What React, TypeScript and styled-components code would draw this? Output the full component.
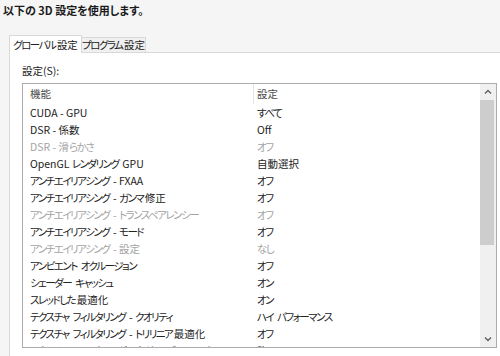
import React from 'react';
import styled, { createGlobalStyle } from 'styled-components';

const GlobalStyle = createGlobalStyle`
  html, body {
    margin: 0;
    padding: 0;
    background: #f5f5f5;
  }
  body {
    font-family: "Noto Sans CJK JP", "Noto Sans", sans-serif;
    font-feature-settings: "palt";
  }
`;

const Screen = styled.div`
  width: 500px;
  height: 356px;
  overflow: hidden;
  display: flex;
  flex-direction: column;
`;

const Title = styled.h1`
  margin: 0;
  padding-left: 3px;
  height: 20px;
  line-height: 20px;
  font-size: 11px;
  font-weight: 700;
  color: #1a1a1a;
`;

const TabRow = styled.div`
  display: flex;
  align-items: flex-end;
  height: 18px;
  margin: 15px 0 -1px 9px;
  position: relative;
  z-index: 1;
`;

const Tab = styled.div<{ $active?: boolean }>`
  box-sizing: border-box;
  width: ${(p) => (p.$active ? '73px' : '65px')};
  height: ${(p) => (p.$active ? '18px' : '16px')};
  line-height: ${(p) => (p.$active ? '17px' : '14px')};
  text-align: center;
  font-size: 10.5px;
  color: #222222;
  background: ${(p) => (p.$active ? '#ffffff' : '#f0f0f0')};
  border: 1px solid #d9d9d9;
  border-bottom: ${(p) => (p.$active ? 'none' : '1px solid #d9d9d9')};
  margin-left: ${(p) => (p.$active ? '0' : '-1px')};
  white-space: nowrap;
`;

const Panel = styled.div`
  flex: 1;
  margin-left: 9px;
  background: #ffffff;
  border-top: 1px solid #d9d9d9;
  border-left: 1px solid #d9d9d9;
  padding-left: 12px;
`;

const Label = styled.div`
  margin-top: 11px;
  height: 14px;
  line-height: 14px;
  font-size: 10.5px;
  color: #222222;
`;

const ListBox = styled.div`
  box-sizing: border-box;
  margin-top: 5px;
  width: 475px;
  height: 265px;
  border: 1px solid #acacac;
  display: flex;
  overflow: hidden;
`;

const ListBody = styled.div`
  flex: 1;
  display: flex;
  flex-direction: column;
  overflow: hidden;
`;

const Row = styled.div<{ $header?: boolean; $disabled?: boolean }>`
  flex: none;
  display: grid;
  grid-template-columns: 230px 1fr;
  height: ${(p) => (p.$header ? '20px' : '17px')};
  line-height: ${(p) => (p.$header ? '20px' : '17px')};
  font-size: 10.5px;
  color: ${(p) => (p.$header ? '#4a4a4a' : p.$disabled ? '#a3a3a3' : '#222222')};
  white-space: nowrap;
`;

const Cell = styled.div<{ $divider?: boolean }>`
  padding-left: ${(p) => (p.$divider ? '3px' : '7px')};
  border-left: ${(p) => (p.$divider ? '1px solid #e5e5e5' : 'none')};
  overflow: hidden;
`;

const ValueCell = styled.div`
  padding-left: 4px;
  overflow: hidden;
`;

// kana are set much narrower in the reference UI font
const Kana = styled.span`
  letter-spacing: -1.5px;
  padding-right: 1.5px;
`;

const ScrollBar = styled.div`
  width: 16px;
  display: flex;
  flex-direction: column;
  background: #f0f0f0;
`;

const ArrowBox = styled.div`
  height: 16px;
  display: flex;
  align-items: center;
  justify-content: center;
  flex: none;
`;

const Thumb = styled.div`
  height: 145px;
  margin-right: 2px;
  background: #cdcdcd;
  flex: none;
`;

const Track = styled.div`
  flex: 1;
`;

type Setting = { name: string; value: string; disabled?: boolean };

const settings: Setting[] = [
  { name: 'CUDA - GPU', value: 'すべて' },
  { name: 'DSR - 係数', value: 'Off' },
  { name: 'DSR - 滑らかさ', value: 'オフ', disabled: true },
  { name: 'OpenGL レンダリング GPU', value: '自動選択' },
  { name: 'アンチエイリアシング - FXAA', value: 'オフ' },
  { name: 'アンチエイリアシング - ガンマ修正', value: 'オフ' },
  { name: 'アンチエイリアシング - トランスペアレンシー', value: 'オフ', disabled: true },
  { name: 'アンチエイリアシング - モード', value: 'オフ' },
  { name: 'アンチエイリアシング - 設定', value: 'なし', disabled: true },
  { name: 'アンビエント オクルージョン', value: 'オフ' },
  { name: 'シェーダー キャッシュ', value: 'オン' },
  { name: 'スレッドした最適化', value: 'オン' },
  { name: 'テクスチャ フィルタリング - クオリティ', value: 'ハイ パフォーマンス' },
  { name: 'テクスチャ フィルタリング - トリリニア最適化', value: 'オフ' },
  { name: 'テクスチャ フィルタリング - ネガティブ LOD バイアス', value: '許可' },
];

const kanaRun = /([\u3041-\u30ff]+)/;
const isKana = /^[\u3041-\u30ff]+$/;

const UiText: React.FC<{ text: string }> = ({ text }) => (
  <>
    {text.split(kanaRun).map((part, i) =>
      isKana.test(part) ? <Kana key={i}>{part}</Kana> : <React.Fragment key={i}>{part}</React.Fragment>
    )}
  </>
);

const Chevron: React.FC<{ up?: boolean }> = ({ up }) => (
  <svg width="8" height="6" viewBox="0 0 8 6">
    <polyline
      points={up ? '1,4.5 4,1.5 7,4.5' : '1,1.5 4,4.5 7,1.5'}
      fill="none"
      stroke="#606060"
      strokeWidth="1.4"
    />
  </svg>
);

const App: React.FC = () => (
  <Screen>
    <GlobalStyle />
    <Title>以下の 3D 設定を使用します。</Title>
    <TabRow>
      <Tab $active><UiText text="グローバル設定" /></Tab>
      <Tab><UiText text="プログラム設定" /></Tab>
    </TabRow>
    <Panel>
      <Label>設定(S):</Label>
      <ListBox>
        <ListBody>
          <Row $header>
            <Cell>機能</Cell>
            <Cell $divider>設定</Cell>
          </Row>
          {settings.map((s) => (
            <Row key={s.name} $disabled={s.disabled}>
              <Cell><UiText text={s.name} /></Cell>
              <ValueCell><UiText text={s.value} /></ValueCell>
            </Row>
          ))}
        </ListBody>
        <ScrollBar>
          <ArrowBox>
            <Chevron up />
          </ArrowBox>
          <Thumb />
          <Track />
          <ArrowBox>
            <Chevron />
          </ArrowBox>
        </ScrollBar>
      </ListBox>
    </Panel>
  </Screen>
);

export default App;
